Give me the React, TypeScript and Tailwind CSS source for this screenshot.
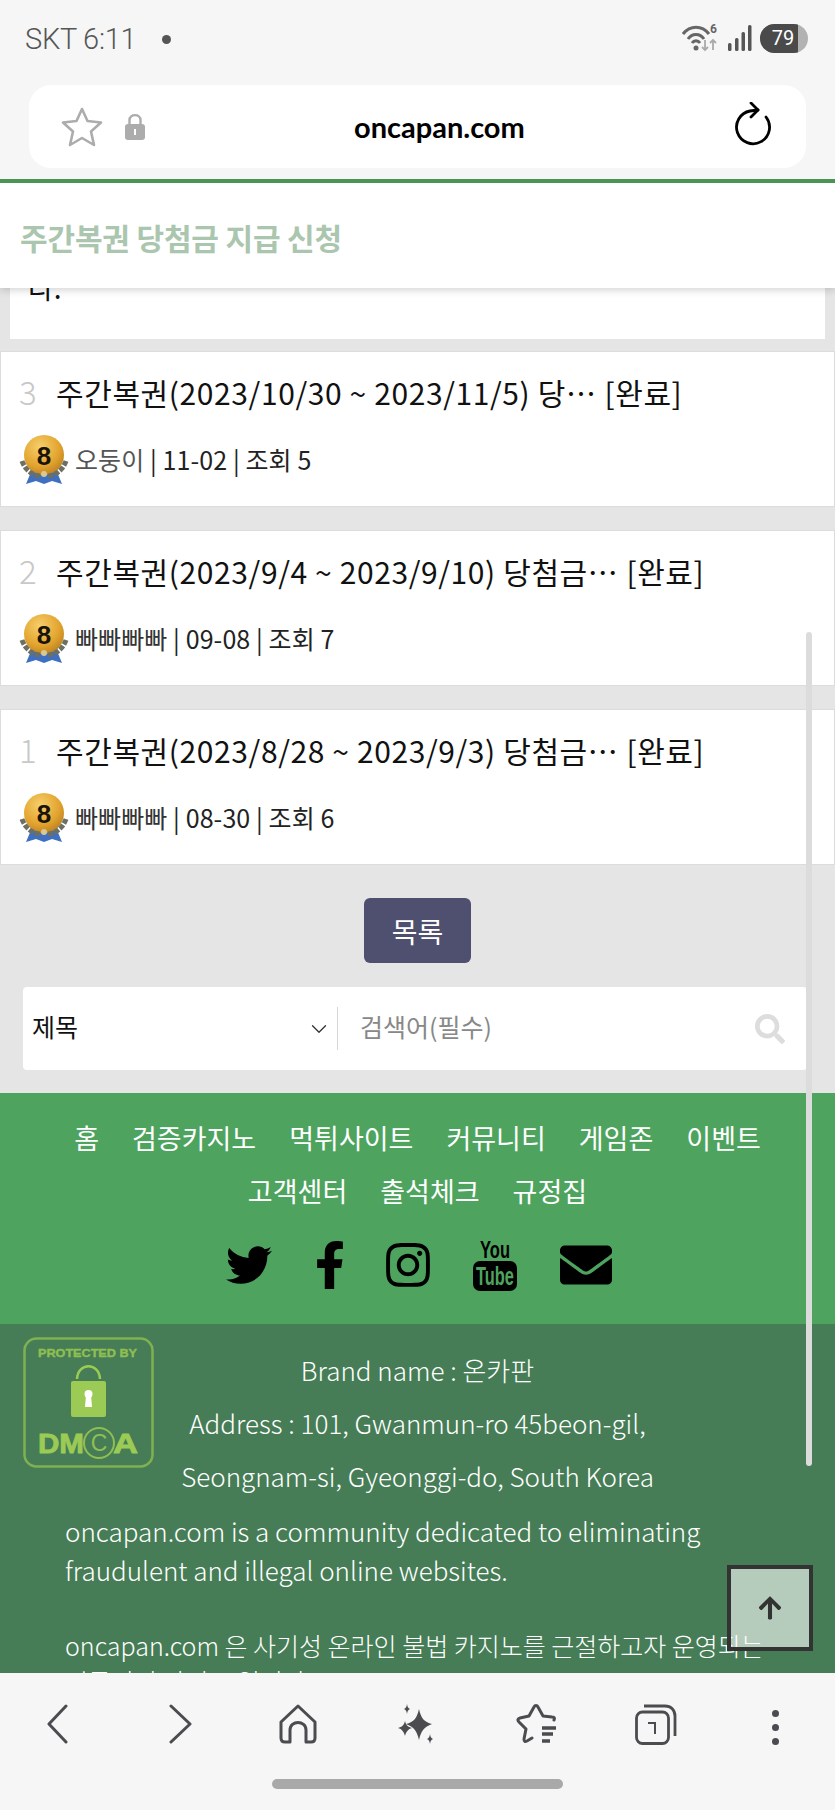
import React from 'react';
import { FaTwitter, FaFacebookF, FaInstagram, FaEnvelope, FaArrowUp, FaSearch } from 'react-icons/fa';
import { ChevronDown } from 'lucide-react';

const posts = [
  { no: 3, title: '주간복권(2023/10/30 ~ 2023/11/5) 당…', author: '오둥이', date: '11-02', views: 5 },
  { no: 2, title: '주간복권(2023/9/4 ~ 2023/9/10) 당첨금…', author: '빠빠빠빠', date: '09-08', views: 7 },
  { no: 1, title: '주간복권(2023/8/28 ~ 2023/9/3) 당첨금…', author: '빠빠빠빠', date: '08-30', views: 6 },
];

const Medal = () => (
  <svg width="50" height="52" viewBox="0 0 50 52" className="shrink-0">
    <path d="M12 38 L38 38 L43 50 L33 47 L25 50 L17 47 L7 50 Z" fill="#3f6fc0" />
    <defs>
      <radialGradient id="gold" cx="40%" cy="30%" r="80%">
        <stop offset="0%" stopColor="#f6cf6b" />
        <stop offset="60%" stopColor="#e3a42f" />
        <stop offset="100%" stopColor="#b57a1c" />
      </radialGradient>
    </defs>
    <circle cx="25" cy="21" r="20" fill="url(#gold)" />
    <path d="M3 27 C6 36 14 42 22 42 M47 27 C44 36 36 42 28 42" fill="none" stroke="#6d6f63" strokeWidth="5" strokeDasharray="5 1.5" />
    <circle cx="25" cy="40" r="3" fill="#d9c88f" />
    <text x="25" y="31" textAnchor="middle" fontSize="26" fontWeight="900" fill="#1a1408" fontFamily="'Liberation Sans', sans-serif">8</text>
  </svg>
);

const PostCard = ({ post }: { post: (typeof posts)[number] }) => (
  <div className="h-[156px] mb-[23px] bg-white border border-[#dcdcdc] pl-[18px] flex flex-col">
    <div className="flex items-center h-[40px] mt-[20px] text-[30px] tracking-[0.6px] text-[#111] whitespace-nowrap">
      <span className="w-[37px] text-[#c8c8c8] font-light text-[33px]">{post.no}</span>
      <span>{post.title}</span>
      <span className="ml-[8px]">[완료]</span>
    </div>
    <div className="flex items-center mt-[22px] text-[25px] text-[#222] whitespace-nowrap">
      <Medal />
      <span className="ml-[6px] tracking-[0.1px]">
        <span className={post.no === 3 ? 'text-[#555]' : 'text-[#333]'}>{post.author}</span> | {post.date} | 조회 {post.views}
      </span>
    </div>
  </div>
);

const StatusBar = () => (
  <div className="h-[85px] flex items-start justify-between pl-[25px] pr-[27px] pt-[23px] shrink-0">
    <div className="flex items-center text-[#555] text-[29px] leading-[32px] font-['Roboto',sans-serif] font-light">
      <span className="tracking-[-0.3px]">SKT 6:11</span>
      <span className="ml-[26px] w-[9px] h-[9px] rounded-full bg-[#555]" />
    </div>
    <div className="flex items-center">
      <svg width="40" height="30" viewBox="0 0 40 30" fill="none" className="mr-[6px]">
        <path d="M1 11 C8 2 20 2 27 11" stroke="#666" strokeWidth="3" />
        <path d="M6 16 C10 10 18 10 22 16" stroke="#666" strokeWidth="3" />
        <path d="M10 20 C12 17 16 17 18 20" stroke="#666" strokeWidth="3" />
        <circle cx="14" cy="25" r="2.5" fill="#666" />
        <path d="M23 17 V27 M20 24 L23 27 L26 24" stroke="#aaa" strokeWidth="1.8" />
        <path d="M31 27 V17 M28 20 L31 17 L34 20" stroke="#aaa" strokeWidth="1.8" />
        <text x="28" y="10" fontSize="12" fontWeight="700" fill="#666" fontFamily="'Roboto', sans-serif">6</text>
      </svg>
      <svg width="24" height="26" viewBox="0 0 24 26" className="mr-[8px]">
        <rect x="0" y="18" width="3.5" height="8" rx="1.5" fill="#555" />
        <rect x="7" y="13" width="3.5" height="13" rx="1.5" fill="#555" />
        <rect x="13.5" y="7" width="3.5" height="19" rx="1.5" fill="#555" />
        <rect x="20" y="0" width="3.5" height="26" rx="1.5" fill="#555" />
      </svg>
      <div className="relative w-[48px] h-[29px] rounded-full overflow-hidden bg-[#b2b2b2]">
        <div className="h-full w-[38px] bg-[#4a4a4a] flex items-center justify-center text-white text-[20px] font-['Roboto',sans-serif] pl-[8px]">
          79
        </div>
      </div>
    </div>
  </div>
);

const AddressBar = () => (
  <div className="mx-[29px] h-[83px] rounded-[22px] bg-white flex items-center shrink-0 relative">
    <svg width="42" height="40" viewBox="0 0 42 40" fill="none" className="ml-[32px]">
      <path d="M21 2 L26.5 14 L40 15.5 L30 24.5 L33 38 L21 31 L9 38 L12 24.5 L2 15.5 L15.5 14 Z" stroke="#acacac" strokeWidth="2.6" strokeLinejoin="round" />
    </svg>
    <svg width="20" height="27" viewBox="0 0 20 27" className="ml-[22px]">
      <path d="M4.5 12 V7 C4.5 0.5 15.5 0.5 15.5 7 V12" fill="none" stroke="#acacac" strokeWidth="2.4" />
      <rect x="0" y="11" width="20" height="16" rx="3" fill="#acacac" />
      <rect x="9" y="16" width="2" height="6" fill="#fff" />
    </svg>
    <span className="absolute left-[325px] text-[29px] leading-[32px] font-bold text-black font-['Lato',sans-serif]">oncapan.com</span>
    <svg width="40" height="44" viewBox="0 0 40 44" fill="none" className="ml-auto mr-[33px] mb-[5px]">
      <path d="M33 15 A16.500 16.500 0 1 1 17 9 L25 8" stroke="#000" strokeWidth="2.8" strokeLinecap="round" />
      <path d="M18 1 L25 8 L18 15" stroke="#000" strokeWidth="2.8" strokeLinecap="round" strokeLinejoin="round" />
    </svg>
  </div>
);

const YoutubeStack = () => (
  <svg width="44" height="52" viewBox="0 0 44 52">
    <text x="22" y="19" textAnchor="middle" fontSize="23" fontWeight="700" textLength="30" lengthAdjust="spacingAndGlyphs" fontFamily="'Liberation Sans', sans-serif">You</text>
    <rect x="0" y="22" width="44" height="30" rx="7" fill="#000" />
    <text x="22" y="46" textAnchor="middle" fontSize="25" fontWeight="700" fill="#4ea45f" textLength="38" lengthAdjust="spacingAndGlyphs" fontFamily="'Liberation Sans', sans-serif">Tube</text>
  </svg>
);

const DmcaBadge = () => (
  <svg width="131" height="131" viewBox="0 0 131 131">
    <rect x="1.500" y="1.500" width="128" height="128" rx="12" fill="none" stroke="#7fb152" strokeWidth="2.5" />
    <text x="15" y="20" fontSize="11" fontWeight="700" fill="#8fbf52" textLength="99" lengthAdjust="spacingAndGlyphs" stroke="#8fbf52" strokeWidth="0.4" fontFamily="'Liberation Sans', sans-serif">PROTECTED BY</text>
    <path d="M54 42 C55 25 76 25 77 42" fill="none" stroke="#9ccb55" strokeWidth="2.500" />
    <rect x="48" y="44" width="35" height="36" rx="2" fill="#9ccb55" />
    <circle cx="65.500" cy="57" r="4" fill="#fff" />
    <path d="M63 58 L68 58 L69 70 L62 70 Z" fill="#fff" />
    <text x="15" y="116" fontSize="27" fontWeight="900" fill="#9ccb55" stroke="#9ccb55" strokeWidth="0.8" textLength="46" lengthAdjust="spacingAndGlyphs" fontFamily="'Liberation Sans', sans-serif">DM</text>
    <circle cx="76" cy="106" r="15" fill="none" stroke="#8fbf52" strokeWidth="2" />
    <text x="76" y="114" textAnchor="middle" fontSize="23" fill="#8fbf52" fontFamily="'Liberation Sans', sans-serif">C</text>
    <text x="90" y="116" fontSize="27" fontWeight="900" fill="#9ccb55" stroke="#9ccb55" strokeWidth="0.8" textLength="25" lengthAdjust="spacingAndGlyphs" fontFamily="'Liberation Sans', sans-serif">A</text>
  </svg>
);

const BottomBar = () => (
  <div className="h-[137px] bg-[#f6f6f6] shrink-0 relative z-20">
    <div className="grid grid-cols-7 pt-[31px] h-[41px] items-start box-content text-[#4b4b50]">
      <div className="flex justify-center">
        <svg width="40" height="40" viewBox="0 0 40 40" fill="none" className="ml-[14px]">
          <path d="M19 2 L2 20 L19 38" stroke="currentColor" strokeWidth="3" strokeLinecap="round" strokeLinejoin="round" />
        </svg>
      </div>
      <div className="flex justify-center">
        <svg width="40" height="40" viewBox="0 0 40 40" fill="none" className="-ml-[14px]">
          <path d="M19 2 L38 20 L19 38" stroke="currentColor" strokeWidth="3" strokeLinecap="round" strokeLinejoin="round" />
        </svg>
      </div>
      <div className="flex justify-center">
        <svg width="38" height="40" viewBox="0 0 38 40" fill="none">
          <path d="M2 18 L19 2 L36 18 V34 C36 37 34 38 32 38 H27 V26 C27 16 11 16 11 26 V38 H6 C4 38 2 37 2 34 Z" stroke="currentColor" strokeWidth="3" strokeLinejoin="round" />
        </svg>
      </div>
      <div className="flex justify-center">
        <svg width="40" height="40" viewBox="0 0 40 40" fill="currentColor">
          <path d="M22 5 C24 14 27 18 35 20 C27 23 24 27 22 36 C20 27 17 23 9 20 C17 18 20 14 22 5 Z" />
          <path d="M8 17 C9 21 11 23 15 24 C11 25 9 28 8 32 C7 28 5 25 1 24 C5 23 7 21 8 17 Z" />
          <path d="M10 0 C10.500 3 11 4 13 5 C11 6 10.500 7 10 10 C9.500 7 9 6 7 5 C9 4 9.500 3 10 0 Z" />
          <path d="M33 30 C33.500 33 34 34 36 35 C34 36 33.500 37 33 40 C32.500 37 32 36 30 35 C32 34 32.500 33 33 30 Z" />
        </svg>
      </div>
      <div className="flex justify-center">
        <svg width="42" height="40" viewBox="0 0 42 40" fill="none" stroke="currentColor" strokeWidth="3" strokeLinecap="round" strokeLinejoin="round">
          <path d="M38 16 C39 14 38 13 36 13 L27 12 L22 3 C21 1 19 1 18 3 L13 12 L4 14 C2 14.500 1 16 3 18 L10 25 L8 35 C8 38 9 38 11 37 L16 34" />
          <path d="M26 24 H40 M26 30 H37 M26 37 H34" strokeWidth="3.5" strokeLinecap="butt" />
        </svg>
      </div>
      <div className="flex justify-center">
        <svg width="42" height="41" viewBox="0 0 42 41" fill="none" stroke="currentColor" strokeWidth="2.8">
          <rect x="1.500" y="8" width="32" height="31.500" rx="6" />
          <path d="M9 2 H30 C36 2 40 6 40 12 V32" />
          <path d="M13 19 H20 V30" strokeWidth="2" />
        </svg>
      </div>
      <div className="flex flex-col items-center gap-[7px] pt-[6px]">
        <span className="w-[7px] h-[7px] rounded-full bg-[#4b4b50]" />
        <span className="w-[7px] h-[7px] rounded-full bg-[#4b4b50]" />
        <span className="w-[7px] h-[7px] rounded-full bg-[#4b4b50]" />
      </div>
    </div>
    <div className="mt-[34px] mx-auto w-[291px] h-[10px] rounded-full bg-[#a9a9a9]" />
  </div>
);

export default function App() {
  const navItems = ['홈', '검증카지노', '먹튀사이트', '커뮤니티', '게임존', '이벤트', '고객센터', '출석체크', '규정집'];

  return (
    <div className="w-[835px] h-[1810px] flex flex-col overflow-hidden bg-[#f6f6f6] font-['Noto_Sans_CJK_KR',sans-serif]">
      <StatusBar />
      <AddressBar />

      <main className="relative flex-1 min-h-0 mt-[11px] overflow-hidden border-t-4 border-[#4a9455] bg-[#e5e5e5]">
        {/* Sticky page title */}
        <div className="relative z-10 h-[105px] bg-white shadow-[0_2px_8px_rgba(0,0,0,0.18)] flex items-center pl-[20px] pt-[3px]">
          <h1 className="text-[30px] font-bold text-[#abc6ae] tracking-[-0.15px]">주간복권 당첨금 지급 신청</h1>
        </div>

        <div className="mx-[10px] h-[51px] bg-white pl-[18px] overflow-hidden">
          <p className="text-[28px] leading-[40px] -mt-[21px] text-[#111]">다.</p>
        </div>

        <div className="mt-[12px]">
          {posts.map((post) => (
            <PostCard key={post.no} post={post} />
          ))}
        </div>

        <div className="flex justify-center pt-[10px]">
          <button className="w-[107px] h-[65px] rounded-[6px] bg-[#4f506f] text-white text-[28px]">목록</button>
        </div>

        <div className="ml-[23px] w-[784px] h-[83px] mt-[24px] bg-white rounded-[4px] flex items-center">
          <span className="ml-[9px] w-[274px] text-[25px] text-[#111] -mt-[4px]">제목</span>
          <ChevronDown className="w-[26px] h-[26px] text-[#333]" strokeWidth={1.200} />
          <span className="ml-[5px] w-px h-[43px] bg-[#d5d5d5]" />
          <span className="ml-[22px] text-[25px] text-[#888] -mt-[4px]">검색어(필수)</span>
          <FaSearch className="ml-auto mr-[22px] w-[30px] h-[30px] text-[#dddddd]" />
        </div>

        <div className="mt-[23px] h-[231px] bg-[#4ea45f] pt-[18px]">
          <div className="flex flex-wrap justify-center gap-x-[33px] px-[40px] text-white text-[27px] leading-[53px]">
            {navItems.map((item) => (
              <span key={item}>{item}</span>
            ))}
          </div>
          <div className="flex items-center justify-center gap-x-[43px] mt-[22px] text-black">
            <FaTwitter className="w-[46px] h-[46px] ml-[2px]" />
            <FaFacebookF className="w-[44px] h-[48px] -mx-[7px]" />
            <FaInstagram className="w-[50px] h-[50px] -ml-[5px]" />
            <div className="-ml-[3px]">
              <YoutubeStack />
            </div>
            <FaEnvelope className="w-[52px] h-[52px]" />
          </div>
        </div>

        <div className="bg-[#467d56] text-white pt-[13px] h-[400px]">
          <div className="grid">
            <div className="col-start-1 row-start-1 ml-[23px] w-[131px]">
              <DmcaBadge />
            </div>
            <div className="col-start-1 row-start-1 text-center text-[26px] leading-[53px] font-light pt-[6px]">
              <p>Brand name : 온카판</p>
              <p>Address : 101, Gwanmun-ro 45beon-gil,</p>
              <p>Seongnam-si, Gyeonggi-do, South Korea</p>
            </div>
          </div>
          <div className="px-[65px] font-light mt-[9px]">
            <p className="text-[26px] leading-[39px]">oncapan.com is a community dedicated to eliminating fraudulent and illegal online websites.</p>
            <p className="mt-[38px] text-[25px] leading-[36px]">oncapan.com 은 사기성 온라인 불법 카지노를 근절하고자 운영되는 커뮤니티 사이트 입니다.</p>
          </div>
        </div>

        {/* Page scrollbar thumb */}
        <div className="absolute left-[806px] top-[449px] w-[6px] h-[834px] rounded-full bg-[#dcdcdc]" />

        {/* Back to top */}
        <div className="absolute left-[727px] top-[1382px] w-[86px] h-[86px] border-4 border-[#333333] bg-white/60 flex items-center justify-center">
          <FaArrowUp className="w-[26px] h-[26px] text-[#333333]" />
        </div>
      </main>

      <BottomBar />
    </div>
  );
}
